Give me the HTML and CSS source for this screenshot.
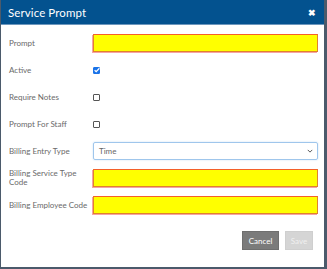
FILE: index.html
```html
<!DOCTYPE html>
<html lang="en">
<head>
  <meta charset="UTF-8">
  <title>Service Prompt</title>
  <link rel="stylesheet" href="styles.css">
</head>
<body>

<div class="dialog">
  <div class="dialog-header">
    <span class="title">Service Prompt</span>
    <span class="close">&#x2716;</span>
  </div>

  <div class="dialog-body">
    <div class="row">
      <label class="label">Prompt</label>
      <div class="field"><input class="input required" type="text"></div>
    </div>
    <div class="row">
      <label class="label">Active</label>
      <div class="field"><span class="check checked">
        <svg viewBox="0 0 8 8" width="8" height="8"><path d="M1.6 4.2 L3.2 5.7 L6.4 2.3" fill="none" stroke="#fff" stroke-width="1.3"/></svg>
      </span></div>
    </div>
    <div class="row">
      <label class="label">Require Notes</label>
      <div class="field"><span class="check"></span></div>
    </div>
    <div class="row">
      <label class="label">Prompt For Staff</label>
      <div class="field"><span class="check"></span></div>
    </div>
    <div class="row">
      <label class="label">Billing Entry Type</label>
      <div class="field">
        <div class="select">
          <span>Time</span>
          <svg viewBox="0 0 8 5" width="6" height="4"><path d="M1 1 L4 4 L7 1" fill="none" stroke="#555" stroke-width="1.3"/></svg>
        </div>
      </div>
    </div>
    <div class="row">
      <label class="label">Billing Service Type<br>Code</label>
      <div class="field"><input class="input required" type="text"></div>
    </div>
    <div class="row">
      <label class="label">Billing Employee Code</label>
      <div class="field"><input class="input required" type="text"></div>
    </div>
  </div>

  <div class="dialog-footer">
    <button class="btn btn-cancel">Cancel</button>
    <button class="btn btn-save">Save</button>
  </div>
</div>

</body>
</html>
```

FILE: styles.css
```css
* { box-sizing: border-box; }

body {
  margin: 0;
  padding: 0 3px 2px 1px;
  background: #4b5a6b;
  font-family: Lato, "Open Sans", sans-serif;
  height: 269px;
}

.dialog {
  background: #fff;
  height: 267px;
  display: flex;
  flex-direction: column;
}

.dialog-header {
  background: #03528f;
  color: #fff;
  height: 25px;
  display: flex;
  align-items: center;
  justify-content: space-between;
  padding: 0 8px 0 7px;
  border-bottom: 1px solid #6d97bd;
}

.title {
  font-size: 11.5px;
  letter-spacing: 0.1px;
}

.close {
  font-size: 9px;
  font-weight: bold;
}

.dialog-body {
  padding: 9px 6px 0 8px;
  display: flex;
  flex-direction: column;
  gap: 9px;
}

.row {
  display: flex;
  align-items: center;
  min-height: 18px;
}

.label {
  width: 84px;
  font-size: 8px;
  color: #6a6a6a;
  line-height: 9px;
}

.field {
  flex: 1;
  display: flex;
  align-items: center;
}

.input {
  width: 100%;
  height: 18px;
  margin: 0;
  border: 1px solid #e0822e;
  border-top-color: #f4602a;
  background: #ffff00;
  box-shadow: -1px 1px 0 #f7a3a3;
}

.check {
  width: 7px;
  height: 7px;
  border: 1px solid #555;
  border-radius: 1px;
  display: flex;
  align-items: center;
  justify-content: center;
}

.check.checked {
  background: #1a73e8;
  border-color: #1a73e8;
}

.check svg {
  flex: none;
}

.select {
  width: 100%;
  height: 18px;
  border: 1px solid #9fc6ec;
  box-shadow: 0 0 2px #c5ddf3;
  border-radius: 2px;
  display: flex;
  align-items: center;
  justify-content: space-between;
  padding: 0 4px 0 5px;
  font-size: 8px;
  color: #666;
}

.dialog-footer {
  margin-top: auto;
  display: flex;
  justify-content: flex-end;
  gap: 6px;
  padding: 0 11px 17px 0;
}

.btn {
  height: 19px;
  border: 1px solid #888;
  font-family: Lato, "Open Sans", sans-serif;
  font-size: 8px;
  color: #fff;
  padding: 0;
}

.btn-cancel {
  width: 37px;
  background: #7b7b7b;
  border-color: #6f6f6f;
}

.btn-save {
  width: 28px;
  background: #d5d5d5;
  border-color: #cfcfcf;
  color: #f0f0f0;
}
```
